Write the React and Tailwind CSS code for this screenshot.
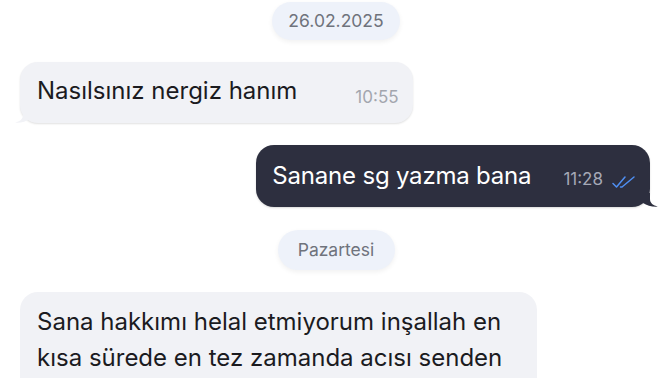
import React from 'react';

function DoubleCheck() {
  return (
    <svg width="24" height="14" viewBox="0 0 24 14" fill="none" className="ml-[9px] mb-[4px]">
      <path d="M1 8.5 L4.5 12 L13 2" stroke="#4f8ff2" strokeWidth="1.5" strokeLinecap="round" strokeLinejoin="round" />
      <path d="M8.5 12 L10 12 L22 2" stroke="#4f8ff2" strokeWidth="1.5" strokeLinecap="round" strokeLinejoin="round" />
    </svg>
  );
}

function TailLeft({ color }) {
  return (
    <svg width="16" height="14" viewBox="0 0 16 14" className="absolute left-[-5px] bottom-0">
      <path d="M8 0 L8 6 C8 10 5 12.5 0 13.6 C6 14 11 12.5 15 10 L15 0 Z" fill={color} />
    </svg>
  );
}

function TailRight({ color }) {
  return (
    <svg width="16" height="14" viewBox="0 0 16 14" className="absolute right-[-8px] bottom-0">
      <path d="M8 0 L8 6 C8 10 11 12.5 16 13.6 C10 14 5 12.5 1 10 L1 0 Z" fill={color} />
    </svg>
  );
}

function DayPill({ width, height, children }) {
  return (
    <div className="flex justify-center">
      <div className={`${width} ${height} flex items-center justify-center rounded-full bg-[#eef2fa] shadow-[0_2px_5px_rgba(0,0,0,0.06)] text-[17.5px] text-[#6f737c]`}>
        {children}
      </div>
    </div>
  );
}

export default function App() {
  return (
    <div className="w-[672px] h-[378px] overflow-hidden bg-white font-['Inter',sans-serif]">
      <div className="flex flex-col gap-[22px] pt-[2px]">
        {/* date */}
        <DayPill width="w-[128px]" height="h-[38px]">26.02.2025</DayPill>

        {/* incoming */}
        <div className="flex pl-[20px]">
          <div className="relative h-[61px] flex items-center rounded-[18px] bg-[#f1f2f6] shadow-[0_1px_2px_rgba(0,0,0,0.12)] pl-[17px] pr-[14px]">
            <TailLeft color="#f1f2f6" />
            <span className="relative mb-[3px] text-[24px] text-[#1b1b1f]">Nasılsınız nergiz hanım</span>
            <span className="relative ml-[58px] mt-[10px] text-[17px] text-[#a3a6ae]">10:55</span>
          </div>
        </div>

        {/* outgoing */}
        <div className="flex justify-end pr-[22px]">
          <div className="relative h-[62px] flex items-center rounded-[18px] bg-[#2d2f3f] shadow-[0_1px_2px_rgba(0,0,0,0.15)] pl-[16px] pr-[14px]">
            <TailRight color="#2d2f3f" />
            <span className="relative mb-[1px] text-[24px] tracking-[-0.2px] text-white">Sanane sg yazma bana</span>
            <span className="relative ml-[32px] mt-[8px] flex items-end text-[17px] text-[#a5a8b6]">
              11:28
              <DoubleCheck />
            </span>
          </div>
        </div>

        {/* day */}
        <div className="mt-[1px]">
          <DayPill width="w-[117px]" height="h-[40px]">Pazartesi</DayPill>
        </div>

        {/* incoming long */}
        <div className="flex pl-[20px]">
          <div className="w-[517px] h-[120px] rounded-[18px] bg-[#f1f2f6] pl-[17px] pr-[12px] pt-[12px]">
            <p className="text-[24px] leading-[36px] text-[#1b1b1f]">
              Sana hakkımı helal etmiyorum inşallah en
              <br />
              kısa sürede en tez zamanda acısı senden
            </p>
          </div>
        </div>
      </div>
    </div>
  );
}
